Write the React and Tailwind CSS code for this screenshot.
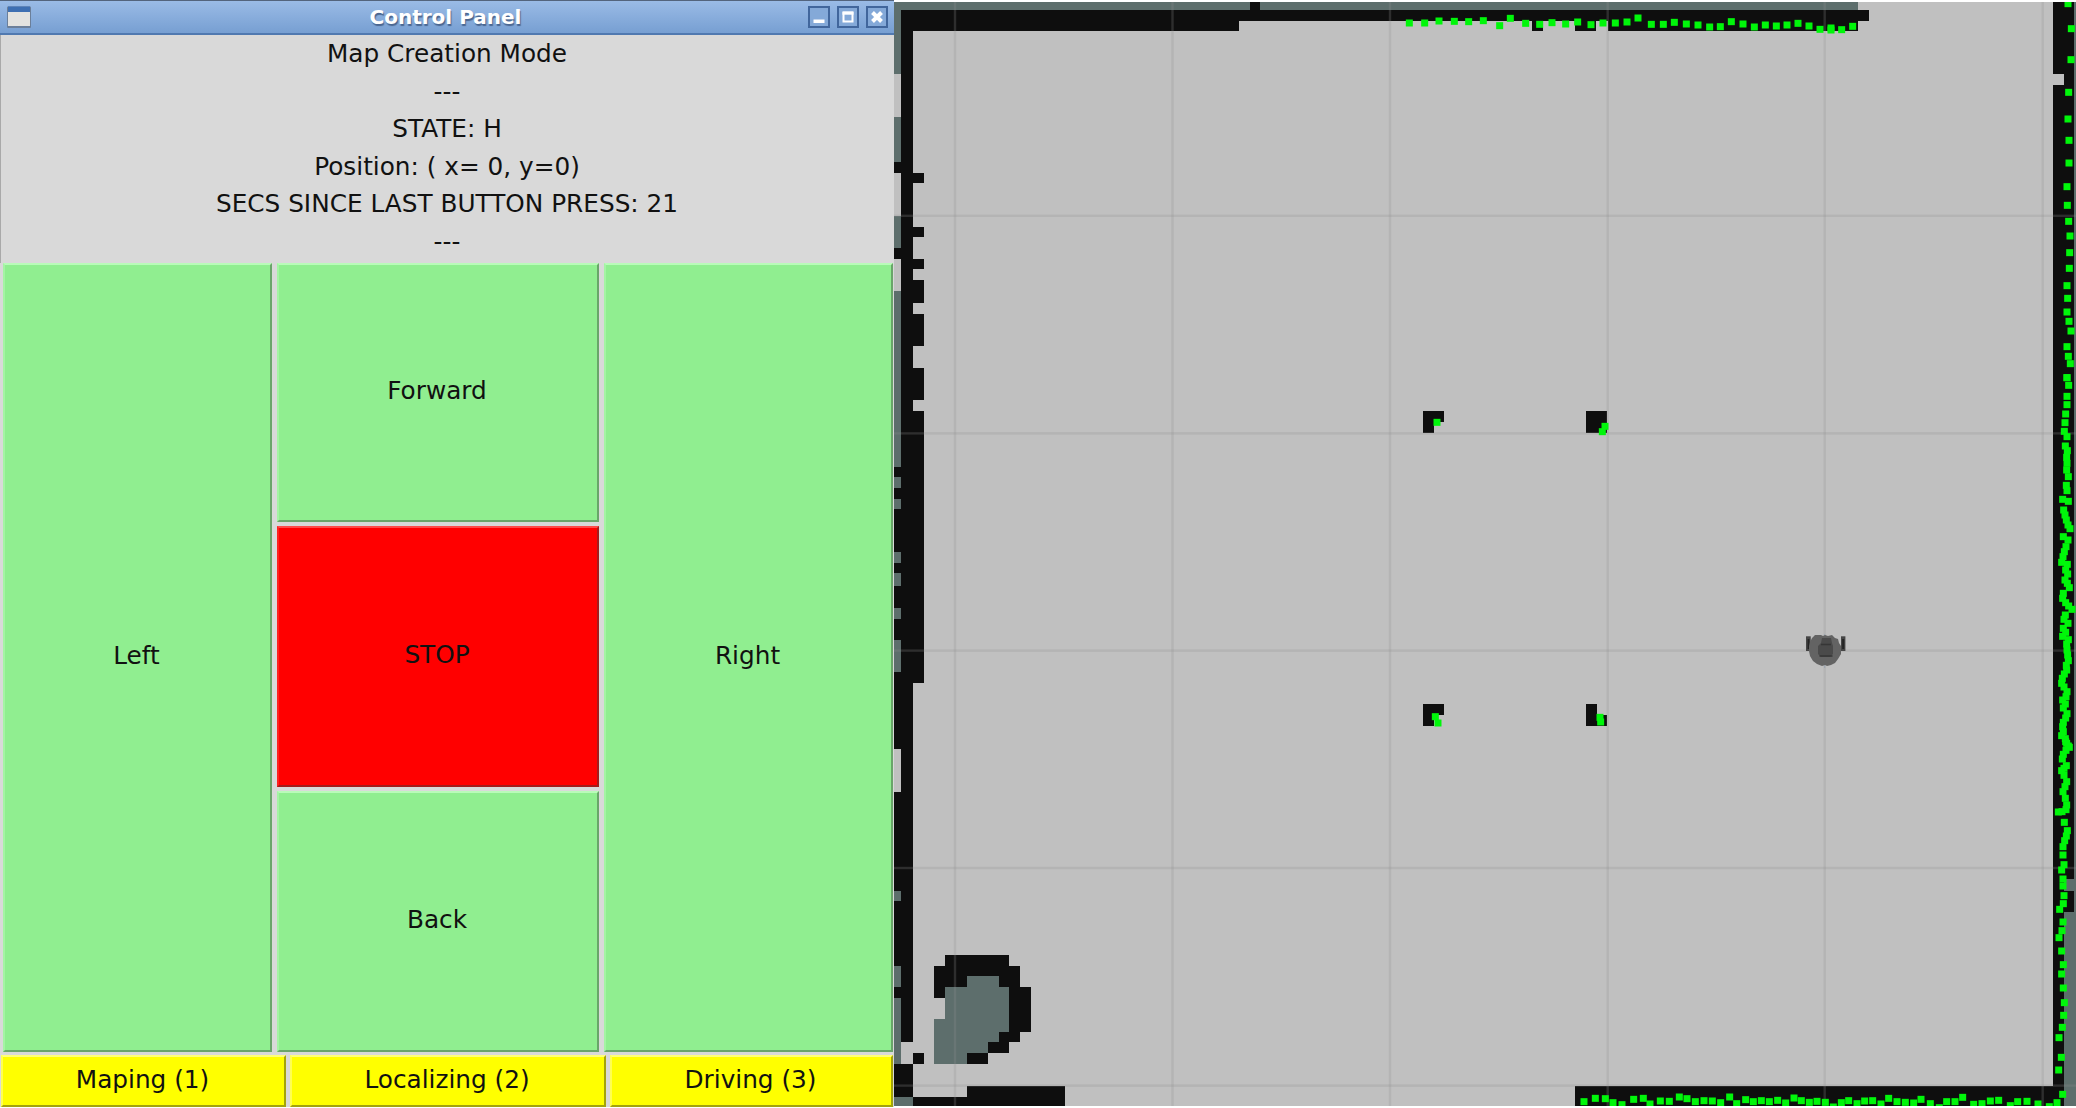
import React from "react";

const WALL = "#0e0e0e";
const UNKNOWN = "#5d6e6c";
const FREE = "#c0c0c0";

// [x1, y1, x2, y2] in map view coordinates
const unknownCells = [
  [894, 2, 1857.5, 10],
  [894, 2, 901, 74], [894, 117, 901, 162], [894, 216, 901, 248], [894, 291, 901, 466.5],
  [2074.3, 2, 2076, 1106], [2063.7, 879.3, 2076, 890.5], [2063.7, 912, 2076, 1106],
];

const wallCells = [
  [901, 10, 912.7, 1042.3],
  [901, 10, 1238.5, 31.4], [1238, 10, 1868.6, 21], [1250, 2, 1260, 11],
  [1607.7, 20, 1857.5, 31.4], [1532, 20, 1542.7, 31.4], [1575, 20, 1596, 31.4],
  [894, 162, 901, 172.7], [894, 248, 901, 258.7], [894, 466.5, 901, 749], [894, 792, 901, 997.5],
  [912.7, 172.7, 923.7, 183.3], [912.7, 226.7, 923.7, 237.3], [912.7, 258.7, 923.7, 269.3],
  [912.7, 280.3, 923.7, 303], [912.7, 314, 923.7, 346], [912.7, 368, 923.7, 400], [912.7, 411, 923.7, 683],
  [894, 1064.3, 912.7, 1096.5], [912.7, 1053.3, 923.5, 1064], [912, 1096.5, 1064.7, 1106], [966.5, 1086, 1064.7, 1106],
  [2053, 2, 2063.7, 1106], [2063, 2, 2074.3, 879.3], [2063, 890.5, 2074.3, 912],
  [1575, 1085.7, 2063.7, 1106],
  [1422.5, 411, 1433.5, 432.5], [1433, 411, 1444.3, 421.7],
  [1585.5, 411, 1607, 432.5],
  [1422.5, 704.3, 1433.5, 725.7], [1433, 704.3, 1444.3, 715],
  [1585.5, 704.3, 1596.5, 725.7], [1596, 715.3, 1607, 725.7],
];

const pockets = [
  [894, 477, 901, 488], [894, 498.5, 901, 509], [894, 552, 901, 563], [894, 573, 901, 586],
  [894, 607.5, 901, 618.5], [894, 640, 901, 672], [894, 890.5, 901, 901], [894, 965.5, 901, 987],
  [894, 997.5, 901, 1064], [894, 1096.5, 912.7, 1106],
];

const gridX = [955, 1172.5, 1390, 1607.7, 1824.7, 2042.7];
const gridY = [215.8, 433.4, 650.6, 868, 1085.6];

// Laser scan segments; points are in thirds of a pixel from each origin
const scans = [
  { x: 1380, y: 0, pts: [[88,69],[134,69],[177,63],[223,64],[266,65],[310,62],[359,77],[391,55],[437,70],[479,73],[516,68],[557,72],[593,66],[633,74],[669,69],[706,69],[741,66],[774,54],[814,73],[850,73],[883,67],[919,72],[954,75],[989,81],[1021,80],[1054,65],[1089,72],[1123,81],[1156,75],[1189,78],[1221,75],[1254,70],[1287,78],[1320,88],[1353,84],[1353,90],[1385,89],[1418,79]] },
  { x: 1980, y: 0, pts: [[264,11],[274,86],[273,179],[266,277],[264,357],[267,421],[267,489],[261,560],[262,616],[266,664],[270,708],[269,758],[268,805],[261,857],[263,895],[261,936],[267,964],[273,993],[261,1040],[265,1069],[271,1091],[261,1133]] },
  { x: 1980, y: 370, pts: [[261,23],[266,46],[261,79],[261,104],[257,132],[255,158],[253,184],[261,200],[256,228],[262,242],[260,262],[261,280],[260,300],[265,320],[259,346],[261,362],[248,388],[265,394],[251,420],[255,435],[259,450],[264,465],[270,476],[250,500],[264,510],[258,530],[253,545],[249,560],[245,577],[262,583],[257,600],[263,612],[255,630],[262,640],[268,653],[250,670],[248,685],[257,698],[266,708],[276,718],[256,735],[252,748],[264,760],[250,775],[257,787],[248,799],[265,809],[260,822],[261,840],[263,855],[265,872],[259,886],[260,900],[253,912],[247,925],[245,940],[252,951],[261,965],[258,980],[248,990],[256,1002],[250,1014],[261,1031],[257,1044],[250,1057],[248,1070],[250,1085],[245,1097],[256,1106],[260,1120],[268,1132]] },
  { x: 1980, y: 740, pts: [[257,5],[265,18],[258,31],[250,43],[247,57],[259,77],[252,85],[245,92],[252,106],[260,125],[255,140],[249,155],[256,175],[260,195],[258,209],[246,215],[235,216],[253,247],[262,272],[259,288],[254,302],[249,320],[249,345],[252,374],[245,390],[249,417],[249,438],[252,467],[250,491],[239,508],[249,546],[246,572],[237,593],[245,633],[250,674],[245,702],[250,744],[253,788],[251,826],[247,862],[237,893],[244,952],[236,990],[248,1063]] },
  { x: 1560, y: 1070, pts: [[72,95],[106,85],[136,86],[159,98],[186,104],[221,88],[250,85],[270,102],[301,93],[328,94],[358,81],[381,86],[406,95],[432,92],[457,93],[482,98],[509,81],[530,101],[557,89],[580,95],[604,92],[628,95],[653,91],[677,99],[702,84],[724,92],[748,97],[771,94],[796,97],[820,111],[844,98],[866,92],[891,101],[914,93],[938,92],[963,102],[986,85],[1011,95],[1036,97],[1061,99],[1083,88],[1111,101],[1138,113],[1160,95],[1185,95],[1208,82],[1241,103],[1266,101],[1291,93],[1316,91],[1351,107],[1373,95],[1401,94],[1434,102],[1468,110],[1491,98]] },
  { x: 1400, y: 390, pts: [[111,97],[615,109],[607,125],[106,980],[114,999],[600,982],[602,996]] },
];

function Cells({ cells, fill }) {
  return cells.map(([a, b, c, d], i) => (
    <rect key={i} x={a} y={b} width={c - a} height={d - b} fill={fill} shapeRendering="crispEdges" />
  ));
}

function MapView() {
  return (
    <svg viewBox="894 0 1182 1108" width="1182" height="1108" className="block shrink-0 bg-white">
      <defs>
        <clipPath id="view"><rect x="894" y="2" width="1182" height="1104" /></clipPath>
      </defs>
      <g clipPath="url(#view)">
        <rect x="894" y="2" width="1182" height="1104" fill={FREE} />
        <Cells cells={unknownCells} fill={UNKNOWN} />
        <Cells cells={wallCells} fill={WALL} />
        <Cells cells={pockets} fill={UNKNOWN} />
        <Cells cells={[[2053, 74.3, 2063.7, 85.3]]} fill={FREE} />
        <g shapeRendering="crispEdges">
          <path fill={WALL} d="M945 955H1009.3V965.7H1020V987H1030.7V1031.7H1020V1042.3H1009.3V1053H988V1063.7H934.3V1019.3H945V997.7H934.3V965.7H945Z" />
          <path fill={UNKNOWN} d="M966.7 976.3H998.7V987H1009.3V1031.7H998.7V1042.3H988V1053H966.7V1063.7H934.3V1019.3H945V987H966.7Z" />
        </g>
        <g fill="#8e8e8e" fillOpacity="0.25">
          {gridX.map((x) => <rect key={x} x={x - 1.2} y="2" width="2.4" height="1104" />)}
          {gridY.map((y) => <rect key={y} x="894" y={y - 1.2} width="1182" height="2.4" />)}
        </g>
        {scans.map((s) => (
          <g key={`${s.x}-${s.y}`} transform={`translate(${s.x} ${s.y}) scale(0.33333)`} fill="#00f60a">
            {s.pts.map(([x, y], i) => <rect key={i} x={x - 10.5} y={y - 10.5} width="21" height="21" />)}
          </g>
        ))}
        <g>
          <path d="M1824.7 634V668" stroke="#9aa5b0" strokeWidth="1" />
          <rect x="1806" y="636.3" width="4.7" height="14.7" fill="#454545" />
          <rect x="1807.6" y="639" width="1.8" height="10" fill="#242424" />
          <rect x="1841" y="636.3" width="4.4" height="14.7" fill="#454545" />
          <rect x="1842.2" y="639" width="2" height="10" fill="#242424" />
          <path fill="#636363" d="M1821 635l2 1 2-1 3 1 4-1 3 3 3 1 1 4 2 3v8l-3 5-3 4-4 2-4 1-2-1-3 1-5-2-4-3-3-5-1-5v-5l1-4 2-4 3-3z" />
          <path fill="#4a4a4a" d="M1822 638h9l1 5 1 3v8l-3 3h-9l-3-3v-8l3-3z" />
          <path d="M1821 644.5h10M1819.5 656h13" stroke="#363636" strokeWidth="1.4" />
        </g>
      </g>
    </svg>
  );
}

function PadButton({ children, className }) {
  return (
    <button className={`flex items-center justify-center border-2 pr-[2px] pb-[3px] ${className}`}>
      {children}
    </button>
  );
}

const green = "bg-[#90ee90] border-t-[#b9fbb9] border-l-[#a4f4a4] border-r-[#6aa56a] border-b-[#6aa56a]";
const yellow = "bg-[#ffff00] border-t-[#ffff78] border-l-[#ffff50] border-r-[#a3a30c] border-b-[#a3a30c]";

function WindowButton({ children }) {
  return (
    <button className="h-[22px] w-[22px] border-2 border-[#41669c] bg-[#84a9d8]">
      <svg viewBox="0 0 18 18" className="block h-[18px] w-[18px]">{children}</svg>
    </button>
  );
}

function TitleBar() {
  return (
    <div className="flex h-[35px] items-center border-t border-b-2 border-t-[#53647d] border-b-[#5079b0] bg-linear-to-b from-[#9abbe6] to-[#779fd2] pl-[7px] pr-[6px]">
      <svg width="24" height="22" viewBox="0 0 24 22" className="shrink-0">
        <rect x="0" y="0.5" width="24" height="21.5" rx="1" fill="#6b7f9a" />
        <rect x="1" y="0.5" width="22" height="5.5" fill="#3e6fb2" />
        <rect x="1" y="6" width="22" height="14" fill="#e2e2e0" />
      </svg>
      <div className="flex-1 pl-[52px] text-center text-[20px] leading-[30px] font-bold text-white [text-shadow:1px_2px_1px_#4a6690]">
        Control Panel
      </div>
      <div className="flex gap-[7px]">
        <WindowButton><rect x="3.5" y="11.5" width="11" height="3.5" fill="#fff" /></WindowButton>
        <WindowButton><path d="M4.5 5V13.5H13.5V5Z" fill="none" stroke="#fff" strokeWidth="2" /><path d="M3.5 5H14.5" stroke="#fff" strokeWidth="3.4" /></WindowButton>
        <WindowButton><path d="M4.5 4.5L13.5 13.5M13.5 4.5L4.5 13.5" stroke="#fff" strokeWidth="4" /></WindowButton>
      </div>
    </div>
  );
}

export default function App() {
  return (
    <div className="flex h-[1108px] w-[2076px] overflow-hidden bg-white font-['DejaVu_Sans',sans-serif] text-[24.75px] text-[#111]">
      <section className="flex h-[1107px] w-[894px] shrink-0 flex-col bg-[#d9d9d9]">
        <TitleBar />
        <div className="flex h-[228px] flex-col items-center border-l border-[#a9a9a9] pr-px text-center leading-[37.6px] whitespace-pre">
          <div>Map Creation Mode</div>
          <div>---</div>
          <div>STATE: H</div>
          <div>Position: ( x= 0, y=0)</div>
          <div>SECS SINCE LAST BUTTON PRESS: 21</div>
          <div>---</div>
        </div>
        <div className="flex h-[789px] gap-[5px] pl-[3px] pr-px">
          <PadButton className={`w-[269px] ${green}`}>Left</PadButton>
          <div className="flex w-[322px] flex-col gap-1">
            <PadButton className={`h-[259px] ${green}`}>Forward</PadButton>
            <PadButton className="h-[261px] border-t-[#ff4a4a] border-l-[#ff2020] border-r-[#a31c1c] border-b-[#a31c1c] bg-[#ff0000]">STOP</PadButton>
            <PadButton className={`h-[261px] ${green}`}>Back</PadButton>
          </div>
          <PadButton className={`flex-1 ${green}`}>Right</PadButton>
        </div>
        <div className="mt-[3px] flex h-[52px] gap-1 pl-px pr-px">
          <PadButton className={`w-[285px] ${yellow}`}>Maping (1)</PadButton>
          <PadButton className={`w-[316px] ${yellow}`}>Localizing (2)</PadButton>
          <PadButton className={`flex-1 ${yellow}`}>Driving (3)</PadButton>
        </div>
      </section>
      <MapView />
    </div>
  );
}
